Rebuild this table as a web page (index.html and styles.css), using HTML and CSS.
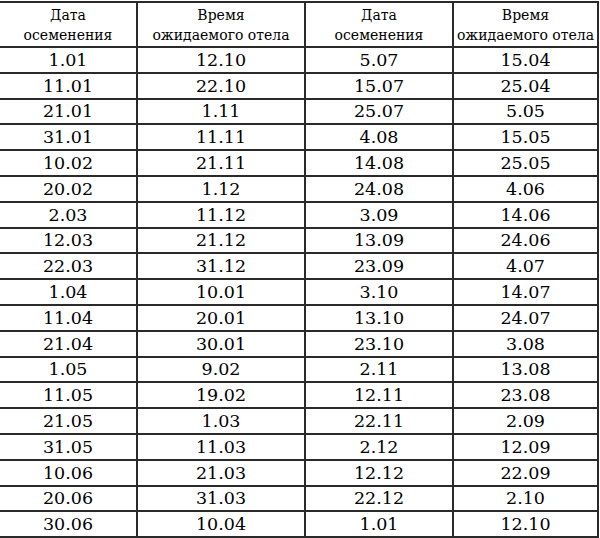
FILE: index.html
```html
<!DOCTYPE html>
<html lang="ru">
<head>
<meta charset="utf-8">
<link rel="stylesheet" href="styles.css">
<title>Календарь отелов</title>
</head>
<body>
<table class="calving">
  <colgroup>
    <col class="c1"><col class="c2"><col class="c3"><col class="c4">
  </colgroup>
  <thead>
    <tr>
      <th>Дата<br>осеменения</th>
      <th>Время<br>ожидаемого отела</th>
      <th>Дата<br>осеменения</th>
      <th>Время<br>ожидаемого отела</th>
    </tr>
  </thead>
  <tbody>
    <tr><td>1.01</td><td>12.10</td><td>5.07</td><td>15.04</td></tr>
    <tr><td>11.01</td><td>22.10</td><td>15.07</td><td>25.04</td></tr>
    <tr><td>21.01</td><td>1.11</td><td>25.07</td><td>5.05</td></tr>
    <tr><td>31.01</td><td>11.11</td><td>4.08</td><td>15.05</td></tr>
    <tr><td>10.02</td><td>21.11</td><td>14.08</td><td>25.05</td></tr>
    <tr><td>20.02</td><td>1.12</td><td>24.08</td><td>4.06</td></tr>
    <tr><td>2.03</td><td>11.12</td><td>3.09</td><td>14.06</td></tr>
    <tr><td>12.03</td><td>21.12</td><td>13.09</td><td>24.06</td></tr>
    <tr><td>22.03</td><td>31.12</td><td>23.09</td><td>4.07</td></tr>
    <tr><td>1.04</td><td>10.01</td><td>3.10</td><td>14.07</td></tr>
    <tr><td>11.04</td><td>20.01</td><td>13.10</td><td>24.07</td></tr>
    <tr><td>21.04</td><td>30.01</td><td>23.10</td><td>3.08</td></tr>
    <tr><td>1.05</td><td>9.02</td><td>2.11</td><td>13.08</td></tr>
    <tr><td>11.05</td><td>19.02</td><td>12.11</td><td>23.08</td></tr>
    <tr><td>21.05</td><td>1.03</td><td>22.11</td><td>2.09</td></tr>
    <tr><td>31.05</td><td>11.03</td><td>2.12</td><td>12.09</td></tr>
    <tr><td>10.06</td><td>21.03</td><td>12.12</td><td>22.09</td></tr>
    <tr><td>20.06</td><td>31.03</td><td>22.12</td><td>2.10</td></tr>
    <tr><td>30.06</td><td>10.04</td><td>1.01</td><td>12.10</td></tr>
  </tbody>
</table>
</body>
</html>
```

FILE: styles.css
```css
html, body {
  margin: 0;
  padding: 0;
  background: #fff;
}

body {
  padding-top: 1px;
  font-family: "DejaVu Serif", "Liberation Serif", serif;
  color: #000;
}

.calving {
  border-collapse: collapse;
  table-layout: fixed;
  width: 598px;
}

.calving col.c1 { width: 137px; }
.calving col.c2 { width: 168px; }
.calving col.c3 { width: 148px; }
.calving col.c4 { width: 145px; }

.calving th,
.calving td {
  border: 2px solid #2a2a2a;
  padding: 0;
  text-align: center;
  vertical-align: middle;
  white-space: nowrap;
}

.calving th:first-child,
.calving td:first-child {
  border-left: none;
}

.calving th {
  font-weight: normal;
  font-size: 14px;
  line-height: 20px;
  height: 43px;
}

.calving td {
  font-size: 17.5px;
  line-height: 20px;
  height: 23.8px;
}
```
